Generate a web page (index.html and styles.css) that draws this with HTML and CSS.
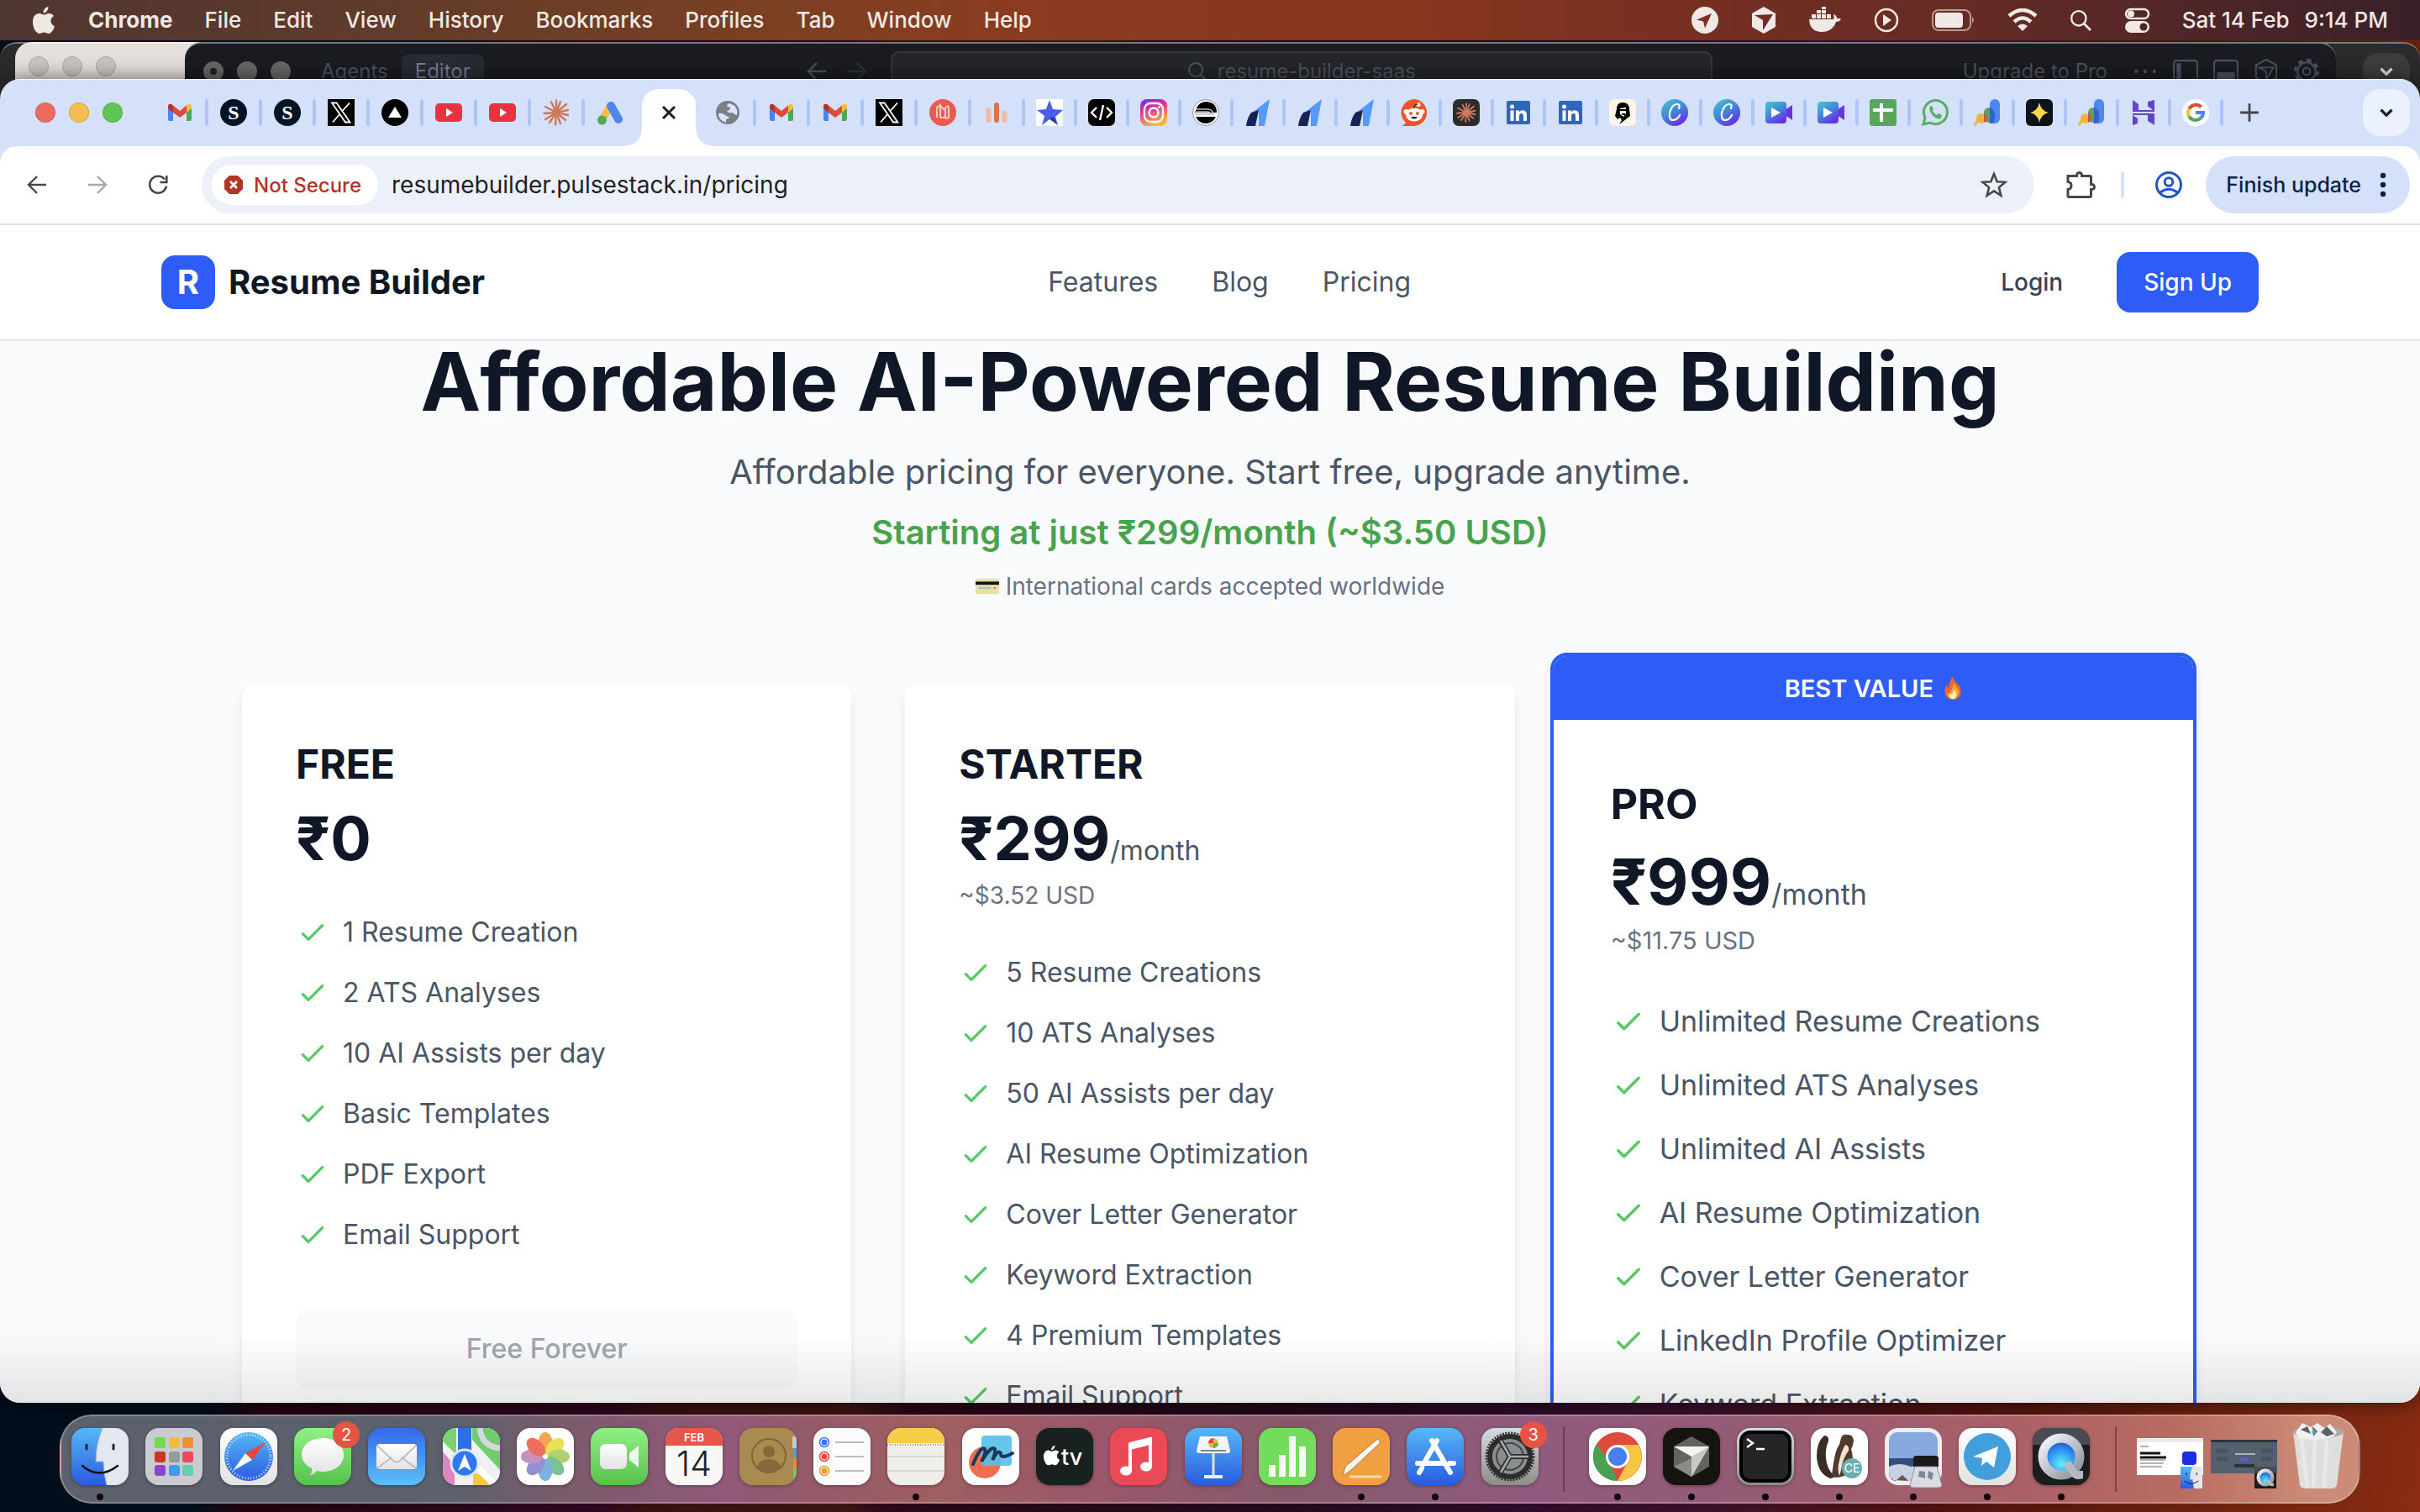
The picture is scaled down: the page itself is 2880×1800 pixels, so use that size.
FILE: index.html
```html
<!DOCTYPE html>
<html lang="en">
<head>
    <meta charset="UTF-8">
    <meta name="viewport" content="width=device-width, initial-scale=1.0">
    <title>Pricing - Resume Builder</title>
    <link rel="stylesheet" href="styles.css">
</head>
<body>
    <!-- shared icons -->
    <svg class="sprite" aria-hidden="true">
        <defs>
            <linearGradient id="gInsta" x1="0" y1="0" x2="0.4" y2="1"><stop offset="0" stop-color="#6a2cf5"/><stop offset=".45" stop-color="#e62e9a"/><stop offset="1" stop-color="#fdb53a"/></linearGradient>
            <linearGradient id="gCanva" x1="0" y1="0" x2="0.6" y2="1"><stop offset="0" stop-color="#4fc4cc"/><stop offset=".5" stop-color="#3f8fd8"/><stop offset="1" stop-color="#6a2ee8"/></linearGradient>
            <linearGradient id="gBlueUp" x1="0" y1="0" x2="0" y2="1"><stop offset="0" stop-color="#3468e8"/><stop offset="1" stop-color="#5cc0f8"/></linearGradient>
            <linearGradient id="gBlueDown" x1="0" y1="0" x2="0" y2="1"><stop offset="0" stop-color="#55b8f5"/><stop offset="1" stop-color="#2a5be0"/></linearGradient>
            <linearGradient id="gGreen" x1="0" y1="0" x2="0" y2="1"><stop offset="0" stop-color="#90f086"/><stop offset="1" stop-color="#56c24a"/></linearGradient>
            <linearGradient id="gWhite" x1="0" y1="0" x2="0" y2="1"><stop offset="0" stop-color="#fff"/><stop offset="1" stop-color="#e2e2e2"/></linearGradient>
            <linearGradient id="gSteel" x1="0" y1="0" x2="1" y2="1"><stop offset="0" stop-color="#f5f8fc"/><stop offset="1" stop-color="#8b9099"/></linearGradient>
            <linearGradient id="gGray" x1="0" y1="0" x2="0" y2="1"><stop offset="0" stop-color="#d5dde2"/><stop offset="1" stop-color="#8d8d89"/></linearGradient>
            <radialGradient id="gQt" cx=".5" cy=".7" r=".7"><stop offset="0" stop-color="#5ff0ff"/><stop offset=".6" stop-color="#2a86f0"/><stop offset="1" stop-color="#1a3fb8"/></radialGradient>
        </defs>

        <symbol id="i-gmail" viewBox="0 0 32 32"><path d="M2 9v15q0 2 2 2h4V14z" fill="#4a84f0"/><path d="M30 9v15q0 2-2 2h-4V14z" fill="#4fa559"/><path d="M24 7.500l2-1.500q4-1 4 3v2l-6 5z" fill="#f3c042"/><path d="M8 16V7.500L16 14l8-6.500V16l-8 6z" fill="#dc4b3c"/><path d="M2 9q0-4 4-3l2 1.500V16l-6-5z" fill="#b5352a"/></symbol>
        <symbol id="i-x" viewBox="0 0 32 32"><path d="M0 0h32v32H0z" fill="#000"/><path d="M5 4.500h5.500l16 23H21zM26 4.500L17.500 14M13.800 18.500L6 27.500" fill="none" stroke="#fff" stroke-width="1.800"/></symbol>
        <symbol id="i-triangle" viewBox="0 0 32 32"><circle cx="16" cy="16" r="16" fill="#000"/><path d="M16 9l8 13H8z" fill="#fff"/></symbol>
        <symbol id="i-youtube" viewBox="0 0 32 32"><rect y="5" width="32" height="22" rx="5" fill="#eb323f"/><path d="M13 11v10l8-5z" fill="#fff"/></symbol>
        <symbol id="i-burst" viewBox="0 0 32 32"><path d="M16 16L16 1.500M16 16l5-13M16 16L28 6M16 16l14-3M16 16l14 3M16 16l11 9M16 16l5 13M16 16l-1 14.500M16 16L8 28M16 16L3 24M16 16L1.500 17M16 16L3 9M16 16L10 3.500" stroke="#d0795a" stroke-width="2.400" stroke-linecap="round"/></symbol>
        <symbol id="i-ads" viewBox="0 0 32 32"><path d="M16.500 8L6 25" stroke="#f3c042" stroke-width="9" stroke-linecap="round"/><path d="M17 8l9 16" stroke="#5085ec" stroke-width="10" stroke-linecap="round"/><circle cx="6.500" cy="25" r="5.500" fill="#55a65b"/></symbol>
        <symbol id="i-globe" viewBox="0 0 32 32"><circle cx="16" cy="16" r="14" fill="#7c7f84"/><path d="M5 17q5-1 8 2 2 2 5 2-1 3-4 3v4Q5 25 5 17zM18 5q-3 1-3 4 4 0 4 2t-4 3q2 3 5 2 3 0 4 2l3 1q2-11-9-14z" fill="#d7e2fb"/></symbol>
        <symbol id="i-zag" viewBox="0 0 32 32"><circle cx="16" cy="16" r="16" fill="#ea5a4f"/><path d="M9 22V10l4-3v15M13 8l4 4 5-4M22 8l1 2v12l-4 1M13 22h6V11" fill="none" stroke="#f8cdc6" stroke-width="2"/></symbol>
        <symbol id="i-bars" viewBox="0 0 32 32"><rect x="3.500" y="10" width="6" height="18" rx="3" fill="#efb9a9"/><rect x="13" y="4" width="6" height="24" rx="3" fill="#dc7350"/><rect x="22.500" y="14" width="6" height="14" rx="3" fill="#efb9a9"/></symbol>
        <symbol id="i-star" viewBox="0 0 32 32"><path d="M0 0h32v32H0z" fill="#fff"/><path d="M16 1l4 11 12 1-9 8 3 10-10-7-9 7 3-11-9-7 11-1z" fill="#4a5ee8"/><path d="M16 23l5-2 4 9z" fill="#2336a5"/></symbol>
        <symbol id="i-code" viewBox="0 0 32 32"><rect width="32" height="32" rx="7" fill="#000"/><path d="M10 10l-6 6 6 6M22 10l6 6-6 6M18 7l-4 18" fill="none" stroke="#fff" stroke-width="2.400"/></symbol>
        <symbol id="i-insta" viewBox="0 0 32 32"><rect width="32" height="32" rx="8" fill="url(#gInsta)"/><rect x="5" y="5" width="22" height="22" rx="7" fill="none" stroke="#fff" stroke-width="2.400"/><circle cx="16" cy="16" r="5.500" fill="none" stroke="#fff" stroke-width="2.400"/><circle cx="22.500" cy="9.500" r="1.500" fill="#fff"/></symbol>
        <symbol id="i-train" viewBox="0 0 32 32"><circle cx="16" cy="16" r="15.500" fill="#fff" stroke="#555" stroke-width=".6"/><path d="M5 11Q8 3 17 3q12 1 12 13H3zM4 21h24q-4 8-12 8T4 21z" fill="#000"/><path d="M4 12h14q6 0 7 6H3M4 15h14q3 0 4 3" fill="none" stroke="#bbb" stroke-width="1.500"/></symbol>
        <symbol id="i-sail" viewBox="0 0 32 32"><path d="M30 0L8 17l9-4v19h7z" fill="#559af8"/><path d="M8 16l9-3-4 19H2q1-9 6-16z" fill="#16245a"/></symbol>
        <symbol id="i-reddit" viewBox="0 0 32 32"><path d="M16 0a16 16 0 1 1-2 32H2l4-4A16 16 0 0 1 16 0z" fill="#ee5426"/><ellipse cx="16" cy="18.500" rx="10" ry="8" fill="#fff"/><circle cx="6.500" cy="15" r="3" fill="#fff"/><circle cx="25.500" cy="15" r="3" fill="#fff"/><circle cx="21" cy="6.500" r="2.500" fill="#fff"/><path d="M16 11q0-5 4-5" fill="none" stroke="#333" stroke-width="1.500"/><circle cx="12" cy="17" r="2" fill="#ee5426"/><circle cx="20" cy="17" r="2" fill="#ee5426"/><path d="M12 21h8q-4 5-8 0z"/></symbol>
        <symbol id="i-linkedin" viewBox="0 0 32 32"><rect x="2" y="2" width="28" height="28" rx="2" fill="#2d67bc"/><circle cx="8.500" cy="9" r="2.500" fill="#fff"/><path d="M6.500 13.500h4V26h-4zM13 13.500h4v2q1.500-2.300 4-2.300 5 0 5 6V26h-4v-6q0-3-2.500-3T17 20v6h-4z" fill="#fff"/></symbol>
        <symbol id="i-face" viewBox="0 0 32 32"><rect width="32" height="32" rx="6" fill="#fdf5e8"/><path d="M16 4q-7 0-7 8l-2 8 3 4 3-2 2 3-3 5 8-6 5-4-1-8q0-8-8-8z" fill="#000"/><path d="M13 11l7-1v7l-3 4-4-3z" fill="#fdf5e8"/><path d="M12 13h8M15 18h4" stroke="#000" stroke-width="2"/></symbol>
        <symbol id="i-canva" viewBox="0 0 32 32"><circle cx="16" cy="16" r="16" fill="url(#gCanva)"/><path d="M21 11q2-5-2-5-6 0-9 10-1 9 4 9t8-6" fill="none" stroke="#fff" stroke-width="2.200" stroke-linecap="round"/></symbol>
        <symbol id="i-video" viewBox="0 0 32 32"><path d="M23 13l9-6v18l-9-6z" fill="#6a35d8"/><rect y="3" width="25" height="26" rx="4" fill="url(#gCanva)"/><path d="M7 10v12l11-6z" fill="#fff"/></symbol>
        <symbol id="i-sheets" viewBox="0 0 32 32"><rect width="32" height="32" rx="3" fill="#58a65a"/><path d="M14 5v22M4 13h24" stroke="#fff" stroke-width="4"/></symbol>
        <symbol id="i-whatsapp" viewBox="0 0 32 32"><path d="M2 30l2-8a14 14 0 1 1 6 6z" fill="none" stroke="#57ae68" stroke-width="3"/><path d="M11 8q-4 3 1 10t11 5l1-4-4-2-2 2q-4-2-5-5l1-2-2-4z" fill="#57ae68"/></symbol>
        <symbol id="i-chart" viewBox="0 0 32 32"><path d="M1 31l7-12" stroke="#edb543" stroke-width="3"/><circle cx="9" cy="23" r="6" fill="#edb543"/><rect x="12" y="10" width="13" height="18" rx="6" fill="#55a65b"/><path d="M12 17q4 2 4 8l-4 3z" fill="#dc4b3c"/><path d="M19 6a6 6 0 0 1 12 0v17a6 6 0 0 1-6 6h-6z" fill="#4f86ee"/><path d="M19 10q6 2 6 10t-3 9h-3z" fill="#3263c8"/></symbol>
        <symbol id="i-spark" viewBox="0 0 32 32"><rect width="32" height="32" rx="6" fill="#0c1419"/><path d="M16 4q2 10 11 12-9 2-11 12-2-10-11-12 9-2 11-12z" fill="#f8d74a"/></symbol>
        <symbol id="i-h" viewBox="0 0 32 32"><path d="M3 1l7 5v7h17l-5-4h-1V3l8-2v14H3zM29 31l-8-5v-7H3l6 4v6l-6 2V17h26z" fill="#6444c6"/></symbol>
        <symbol id="i-google" viewBox="0 0 32 32"><circle cx="16" cy="16" r="16" fill="#fff"/><g fill="none" stroke-width="4"><path d="M22.500 9.500A9 9 0 0 0 8.200 11.500" stroke="#dc4b3c"/><path d="M8.200 11.500a9 9 0 0 0 0 9" stroke="#f3c042"/><path d="M8.200 20.500a9 9 0 0 0 14 2" stroke="#55a65b"/><path d="M22.200 22.500A9 9 0 0 0 25 16h-9" stroke="#4a84f0"/></g></symbol>
        <symbol id="i-check" viewBox="0 0 24 24"><path d="M5 13l4 4L19 7" fill="none" stroke="#56c864" stroke-width="2" stroke-linecap="round" stroke-linejoin="round"/></symbol>
        <symbol id="i-chevron" viewBox="0 0 24 24"><path d="M6 9l6 6 6-6" fill="none" stroke="currentColor" stroke-width="3"/></symbol>
        <symbol id="i-arrow" viewBox="0 0 24 24"><path d="M23 12H2M12 2L2 12l10 10" fill="none" stroke="currentColor" stroke-width="2.400"/></symbol>
        <symbol id="i-search" viewBox="0 0 24 24"><circle cx="10" cy="10" r="8" fill="none" stroke="currentColor" stroke-width="2.200"/><path d="M16 16l7 7" stroke="currentColor" stroke-width="2.600"/></symbol>
        <symbol id="i-cube" viewBox="0 0 32 32"><path d="M16 1l13 7v16l-13 7-13-7V8z" fill="none" stroke="currentColor" stroke-width="2.200"/><path d="M7 11h18L16 27V16z" fill="none" stroke="currentColor" stroke-width="2"/></symbol>
        <symbol id="i-apple" viewBox="0 0 28 34"><path d="M19.500 1q0 4-3 6.500-1.500 1.200-3 1Q13.200 5.500 15.500 3q1.600-1.600 4-2zM26 12q-3.500 2.200-3.500 6t4.500 6.500q-1 3.500-3.500 6.500-1.500 2-3.500 2-1.500 0-2.800-.7t-2.700-.7-2.700.7T8.500 33q-2 0-4-2.800Q1 25.500 1 19.500q0-6 3-8.700Q6 9 8.500 9q1.700 0 3.200.8t2.600.8 2.700-.9Q19 9 20.500 9q3.500 0 5.500 3z" fill="currentColor"/></symbol>
        <symbol id="i-finder" viewBox="0 0 68 68"><path d="M0 0h68v68H0z" fill="url(#gBlueDown)"/><path d="M37 0Q29 19 29 40h9q0 14 4 28h26V0z" fill="#e3e7ef"/><path d="M37 0Q29 19 29 40h9q0 14 4 28" fill="none" stroke="#9fb4d8" stroke-width="1"/><path d="M18 20v5M50 20v5" stroke="#1c2a44" stroke-width="3" stroke-linecap="round"/><path d="M13 45q20 17 42 0" fill="none" stroke="#111" stroke-width="2.500" stroke-linecap="round"/></symbol>
        <symbol id="i-quicktime" viewBox="0 0 68 68"><path d="M0 0h68v68H0z" fill="#1d1d20"/><path d="M0 0h68v20H0z" fill="#4a4b50"/><circle cx="34" cy="34" r="22" fill="url(#gQt)" stroke="url(#gSteel)" stroke-width="11"/><path d="M36 43l9-4 8 12h7v9q-9 3-14-3z" fill="#b4b9c3"/></symbol>
    </svg>

    <header class="menubar">
        <nav class="menu">
            <button type="button" class="menu-apple" aria-label="Apple menu"><svg viewBox="0 0 28 34"><use href="#i-apple"/></svg></button>
            <button type="button" class="menu-app">Chrome</button>
            <button type="button">File</button>
            <button type="button">Edit</button>
            <button type="button">View</button>
            <button type="button">History</button>
            <button type="button">Bookmarks</button>
            <button type="button">Profiles</button>
            <button type="button">Tab</button>
            <button type="button">Window</button>
            <button type="button">Help</button>
        </nav>
        <div class="status">
            <svg viewBox="0 0 32 32"><circle cx="16" cy="16" r="16" fill="currentColor"/><path d="M24 8L6 15.500l8 2 2 8z" fill="#7b3023"/></svg>
            <svg viewBox="0 0 32 32"><path d="M16 0l14 8v16l-14 8L2 24V8z" fill="currentColor"/><path d="M5 10l22-1-12 19V16z" fill="#702c23"/></svg>
            <svg class="status-docker" viewBox="0 0 38 32"><path d="M0 15h29q1-4 0-6 4 1 4 5 3-1 5 1-2 3-6 3-4 12-17 12Q1 30 0 15z" fill="currentColor"/><path d="M3 9h5v5H3zM9 9h5v5H9zM15 9h5v5h-5zM21 9h5v5h-5zM9 4h5v4H9zM15 4h5v4h-5zM15-1h5v4h-5z" fill="currentColor"/></svg>
            <svg viewBox="0 0 32 32"><circle cx="16" cy="16" r="13" fill="none" stroke="currentColor" stroke-width="2.500"/><path d="M12 9v14l10-7z" fill="currentColor"/></svg>
            <svg class="status-battery" viewBox="0 0 52 26"><rect x="1" y="1" width="45" height="24" rx="7" fill="none" stroke="#b99a92" stroke-width="2"/><rect x="4" y="4" width="33" height="18" rx="4" fill="currentColor"/><path d="M48 9q4 4 0 8z" fill="#b99a92"/></svg>
            <svg class="status-wifi" viewBox="0 0 36 28"><path d="M2 9q16-14 32 0M8 16q10-9 20 0" fill="none" stroke="currentColor" stroke-width="4.500"/><path d="M18 27l-6-6q6-5 12 0z" fill="currentColor"/></svg>
            <svg class="status-search" viewBox="0 0 24 24"><use href="#i-search"/></svg>
            <svg viewBox="0 0 32 32"><rect x="3" y="3" width="27" height="11" rx="5.500" fill="none" stroke="currentColor" stroke-width="2.500"/><circle cx="9" cy="8.500" r="4" fill="currentColor"/><rect x="2" y="17" width="29" height="14" rx="7" fill="currentColor"/><circle cx="24" cy="24" r="4.500" fill="#4a2428"/></svg>
            <time class="clock"><span>Sat 14 Feb</span> <span>9:14 PM</span></time>
        </div>
    </header>

    <!-- windows behind the browser -->
    <div class="back-window back-right"><button type="button" aria-label="Search tabs"><svg viewBox="0 0 24 24"><use href="#i-chevron"/></svg></button></div>
    <div class="back-window back-light"><i></i><i></i><i></i></div>
    <div class="back-window back-editor">
        <div class="editor-left">
            <div class="editor-dots"><i class="edited"></i><i></i><i></i></div>
            <span class="editor-tab">Agents</span>
            <span class="editor-tab selected">Editor</span>
        </div>
        <div class="editor-arrows">
            <svg viewBox="0 0 24 24"><use href="#i-arrow"/></svg>
            <svg class="forward" viewBox="0 0 24 24"><use href="#i-arrow"/></svg>
        </div>
        <div class="editor-search"><svg viewBox="0 0 24 24"><use href="#i-search"/></svg>resume-builder-saas</div>
        <div class="editor-right">
            <span>Upgrade to Pro</span>
            <svg viewBox="0 0 28 28"><circle cx="4" cy="14" r="2" fill="currentColor"/><circle cx="14" cy="14" r="2" fill="currentColor"/><circle cx="24" cy="14" r="2" fill="currentColor"/></svg>
            <svg viewBox="0 0 28 28"><rect x="1" y="2" width="26" height="24" rx="3" fill="none" stroke="currentColor" stroke-width="2"/><path d="M4 5h5v18H4z" fill="currentColor"/></svg>
            <svg viewBox="0 0 28 28"><rect x="1" y="2" width="26" height="24" rx="3" fill="none" stroke="currentColor" stroke-width="2"/><path d="M4 15h20v8H4z" fill="currentColor"/></svg>
            <svg viewBox="0 0 32 32"><use href="#i-cube"/></svg>
            <svg viewBox="0 0 28 28"><circle cx="14" cy="14" r="10" fill="none" stroke="currentColor" stroke-width="2"/><circle cx="14" cy="14" r="12.500" fill="none" stroke="currentColor" stroke-width="3" stroke-dasharray="5 4.800"/><circle cx="14" cy="14" r="4" fill="none" stroke="currentColor" stroke-width="2"/></svg>
        </div>
    </div>

    <div class="browser">
        <div class="tabstrip">
            <div class="traffic"><i class="close"></i><i class="minimise"></i><i class="zoom"></i></div>
            <div class="tabs">
                <button type="button" class="tab" aria-label="Gmail"><svg><use href="#i-gmail"/></svg></button>
                <button type="button" class="tab"><span class="letter-icon">S</span></button>
                <button type="button" class="tab"><span class="letter-icon">S</span></button>
                <button type="button" class="tab" aria-label="X"><svg><use href="#i-x"/></svg></button>
                <button type="button" class="tab" aria-label="Vercel"><svg><use href="#i-triangle"/></svg></button>
                <button type="button" class="tab" aria-label="YouTube"><svg><use href="#i-youtube"/></svg></button>
                <button type="button" class="tab" aria-label="YouTube"><svg><use href="#i-youtube"/></svg></button>
                <button type="button" class="tab" aria-label="Claude"><svg><use href="#i-burst"/></svg></button>
                <button type="button" class="tab last" aria-label="Google Ads"><svg><use href="#i-ads"/></svg></button>
                <button type="button" class="tab active" aria-label="Close tab"><svg viewBox="0 0 24 24"><path d="M5 5l14 14M19 5L5 19" stroke="#1f1f1f" stroke-width="3"/></svg></button>
                <button type="button" class="tab" aria-label="Website"><svg><use href="#i-globe"/></svg></button>
                <button type="button" class="tab" aria-label="Gmail"><svg><use href="#i-gmail"/></svg></button>
                <button type="button" class="tab" aria-label="Gmail"><svg><use href="#i-gmail"/></svg></button>
                <button type="button" class="tab" aria-label="X"><svg><use href="#i-x"/></svg></button>
                <button type="button" class="tab" aria-label="Listing"><svg><use href="#i-zag"/></svg></button>
                <button type="button" class="tab" aria-label="Dashboard"><svg><use href="#i-bars"/></svg></button>
                <button type="button" class="tab narrow" aria-label="Star"><svg><use href="#i-star"/></svg></button>
                <button type="button" class="tab narrow" aria-label="Code"><svg><use href="#i-code"/></svg></button>
                <button type="button" class="tab narrow" aria-label="Instagram"><svg><use href="#i-insta"/></svg></button>
                <button type="button" class="tab narrow" aria-label="Railway"><svg><use href="#i-train"/></svg></button>
                <button type="button" class="tab narrow" aria-label="Payments"><svg><use href="#i-sail"/></svg></button>
                <button type="button" class="tab narrow" aria-label="Payments"><svg><use href="#i-sail"/></svg></button>
                <button type="button" class="tab narrow" aria-label="Payments"><svg><use href="#i-sail"/></svg></button>
                <button type="button" class="tab narrow" aria-label="Reddit"><svg><use href="#i-reddit"/></svg></button>
                <button type="button" class="tab narrow" aria-label="Claude Code"><svg class="dark"><use href="#i-burst"/></svg></button>
                <button type="button" class="tab narrow" aria-label="LinkedIn"><svg><use href="#i-linkedin"/></svg></button>
                <button type="button" class="tab narrow" aria-label="LinkedIn"><svg><use href="#i-linkedin"/></svg></button>
                <button type="button" class="tab narrow" aria-label="Portrait"><svg><use href="#i-face"/></svg></button>
                <button type="button" class="tab narrow" aria-label="Canva"><svg><use href="#i-canva"/></svg></button>
                <button type="button" class="tab narrow" aria-label="Canva"><svg><use href="#i-canva"/></svg></button>
                <button type="button" class="tab narrow" aria-label="Video"><svg><use href="#i-video"/></svg></button>
                <button type="button" class="tab narrow" aria-label="Video"><svg><use href="#i-video"/></svg></button>
                <button type="button" class="tab narrow" aria-label="Sheets"><svg><use href="#i-sheets"/></svg></button>
                <button type="button" class="tab narrow" aria-label="WhatsApp"><svg><use href="#i-whatsapp"/></svg></button>
                <button type="button" class="tab narrow" aria-label="Search Console"><svg><use href="#i-chart"/></svg></button>
                <button type="button" class="tab narrow" aria-label="Spark"><svg><use href="#i-spark"/></svg></button>
                <button type="button" class="tab narrow" aria-label="Search Console"><svg><use href="#i-chart"/></svg></button>
                <button type="button" class="tab narrow" aria-label="Hostinger"><svg><use href="#i-h"/></svg></button>
                <button type="button" class="tab narrow" aria-label="Google"><svg><use href="#i-google"/></svg></button>
                <button type="button" class="new-tab" aria-label="New tab"><svg viewBox="0 0 24 24"><path d="M12 2v20M2 12h20" stroke="#474747" stroke-width="2.600"/></svg></button>
            </div>
            <button type="button" class="tab-search" aria-label="Search tabs"><svg viewBox="0 0 24 24"><use href="#i-chevron"/></svg></button>
        </div>

        <div class="toolbar">
            <div class="nav-buttons">
                <button type="button" aria-label="Back"><svg viewBox="0 0 24 24"><use href="#i-arrow"/></svg></button>
                <button type="button" class="forward" aria-label="Forward" disabled><svg viewBox="0 0 24 24"><use href="#i-arrow"/></svg></button>
                <button type="button" aria-label="Reload"><svg viewBox="0 0 24 24"><path d="M20 5.500A10 10 0 1 0 22 13.500M22.300 1v8H14.500" fill="none" stroke="currentColor" stroke-width="2.600"/></svg></button>
            </div>
            <div class="omnibox">
                <button type="button" class="not-secure"><svg viewBox="0 0 24 24"><path d="M7 1h10l6 6v10l-6 6H7l-6-6V7z" fill="#b3352a"/><path d="M8 8l8 8M16 8l-8 8" stroke="#fff" stroke-width="2.600"/></svg>Not Secure</button>
                <input type="text" class="address" aria-label="Address" value="resumebuilder.pulsestack.in/pricing">
                <button type="button" class="bookmark" aria-label="Bookmark"><svg viewBox="0 0 32 32"><path d="M16 3l3.700 9.200 9.800.6-7.600 6.300 2.500 9.700L16 23.400l-8.400 5.400 2.500-9.700-7.600-6.300 9.800-.6z" fill="none" stroke="#474747" stroke-width="2.600"/></svg></button>
            </div>
            <button type="button" class="tool" aria-label="Extensions"><svg viewBox="0 0 36 36"><path d="M3 7.500h10.500v-1a3 3 0 0 1 6 0v1H29a1.500 1.500 0 0 1 1.500 1.500v8.500h1a3 3 0 0 1 0 6h-1V31a1.500 1.500 0 0 1-1.500 1.500H4.500A1.500 1.500 0 0 1 3 31v-7.500q4-.5 4-4.500t-4-4.500z" fill="none" stroke="#474747" stroke-width="3"/></svg></button>
            <span class="tool-divider"></span>
            <button type="button" class="tool profile" aria-label="Profile"><svg viewBox="0 0 32 32"><circle cx="16" cy="16" r="14.500" fill="none" stroke="#1f56c4" stroke-width="3"/><circle cx="16" cy="12.500" r="4.800" fill="none" stroke="#1f56c4" stroke-width="3"/><path d="M6 25q10-7.500 20 0" fill="none" stroke="#1f56c4" stroke-width="3"/></svg></button>
            <button type="button" class="update">Finish update<svg viewBox="0 0 8 32"><circle cx="4" cy="5" r="3.200"/><circle cx="4" cy="16" r="3.200"/><circle cx="4" cy="27" r="3.200"/></svg></button>
        </div>

        <div class="page">
            <header class="site-header">
                <div class="site-nav">
                    <a href="#" class="brand"><span class="brand-mark">R</span>Resume Builder</a>
                    <nav class="links">
                        <a href="#">Features</a>
                        <a href="#">Blog</a>
                        <a href="#">Pricing</a>
                    </nav>
                    <div class="account">
                        <a href="#" class="login">Login</a>
                        <a href="#" class="signup">Sign Up</a>
                    </div>
                </div>
            </header>

            <main>
                <section class="hero">
                    <h1>Affordable AI-Powered Resume Building</h1>
                    <p class="lead">Affordable pricing for everyone. Start free, upgrade anytime.</p>
                    <p class="starting">Starting at just ₹299/month (~$3.50 USD)</p>
                    <p class="cards-note"><svg viewBox="0 0 30 20"><rect width="30" height="20" rx="2" fill="#e6dfae"/><path d="M0 4h30v4H0z" fill="#111"/><path d="M4 12h16" stroke="#a9b3c8" stroke-width="2.500" stroke-dasharray="4 1"/><path d="M23 12h3" stroke="#c08a4a" stroke-width="2"/></svg>International cards accepted worldwide</p>
                </section>

                <section class="plans">
                    <article class="plan">
                        <h2>FREE</h2>
                        <p class="price">₹0</p>
                        <ul>
                            <li><svg><use href="#i-check"/></svg>1 Resume Creation</li>
                            <li><svg><use href="#i-check"/></svg>2 ATS Analyses</li>
                            <li><svg><use href="#i-check"/></svg>10 AI Assists per day</li>
                            <li><svg><use href="#i-check"/></svg>Basic Templates</li>
                            <li><svg><use href="#i-check"/></svg>PDF Export</li>
                            <li><svg><use href="#i-check"/></svg>Email Support</li>
                        </ul>
                        <button type="button" class="plan-button" disabled>Free Forever</button>
                    </article>
                    <article class="plan">
                        <h2>STARTER</h2>
                        <p class="price">₹299<span>/month</span></p>
                        <p class="usd">~$3.52 USD</p>
                        <ul>
                            <li><svg><use href="#i-check"/></svg>5 Resume Creations</li>
                            <li><svg><use href="#i-check"/></svg>10 ATS Analyses</li>
                            <li><svg><use href="#i-check"/></svg>50 AI Assists per day</li>
                            <li><svg><use href="#i-check"/></svg>AI Resume Optimization</li>
                            <li><svg><use href="#i-check"/></svg>Cover Letter Generator</li>
                            <li><svg><use href="#i-check"/></svg>Keyword Extraction</li>
                            <li><svg><use href="#i-check"/></svg>4 Premium Templates</li>
                            <li><svg><use href="#i-check"/></svg>Email Support</li>
                        </ul>
                    </article>
                    <article class="plan pro">
                        <p class="best">BEST VALUE<svg viewBox="0 0 24 32"><path d="M12 0q1 6 6 10t5 11q0 10-11 11Q1 31 1 20q0-5 3-9 0 4 2 5 1-9 6-16z" fill="#f0642c"/><path d="M13 9q5 6 7 11 0 10-8 11-8-1-8-9 2 2 4 1 4-5 5-14z" fill="#fba62f"/><path d="M13 18q5 5 4 9-2 4-5 4t-5-4q0-3 2-4l1 2q3-2 3-7z" fill="#fff3b0"/></svg></p>
                        <div class="pro-body">
                            <h2>PRO</h2>
                            <p class="price">₹999<span>/month</span></p>
                            <p class="usd">~$11.75 USD</p>
                            <ul>
                                <li><svg><use href="#i-check"/></svg>Unlimited Resume Creations</li>
                                <li><svg><use href="#i-check"/></svg>Unlimited ATS Analyses</li>
                                <li><svg><use href="#i-check"/></svg>Unlimited AI Assists</li>
                                <li><svg><use href="#i-check"/></svg>AI Resume Optimization</li>
                                <li><svg><use href="#i-check"/></svg>Cover Letter Generator</li>
                                <li><svg><use href="#i-check"/></svg>LinkedIn Profile Optimizer</li>
                                <li><svg><use href="#i-check"/></svg>Keyword Extraction</li>
                            </ul>
                        </div>
                    </article>
                </section>
            </main>
        </div>
    </div>

    <footer class="dock">
        <div class="dock-apps">
            <div class="app running"><svg viewBox="0 0 68 68"><use href="#i-finder"/></svg></div>
            <div class="app"><svg viewBox="0 0 68 68"><path d="M0 0h68v68H0z" fill="#c9cbd0"/><rect x="11" y="11" width="13" height="13" rx="3" fill="#6fdc50"/><rect x="28" y="11" width="13" height="13" rx="3" fill="#f3bc3c"/><rect x="44" y="11" width="13" height="13" rx="3" fill="#ee8f35"/><rect x="11" y="28" width="13" height="13" rx="3" fill="#cc3428"/><rect x="28" y="28" width="13" height="13" rx="3" fill="#94999c"/><rect x="44" y="28" width="13" height="13" rx="3" fill="#ea4a60"/><rect x="11" y="44" width="13" height="13" rx="3" fill="#8c45d0"/><rect x="28" y="44" width="13" height="13" rx="3" fill="#3c9cf5"/><rect x="44" y="44" width="13" height="13" rx="3" fill="#67cfae"/></svg></div>
            <div class="app"><svg viewBox="0 0 68 68"><path d="M0 0h68v68H0z" fill="url(#gWhite)"/><circle cx="34" cy="34" r="29" fill="url(#gBlueDown)"/><circle cx="34" cy="34" r="26" fill="none" stroke="#d6ebfb" stroke-width="3" stroke-dasharray="1 2.400"/><path d="M54 17L30 30l8 8z" fill="#e8483c"/><path d="M15 51l15-21 8 8z" fill="#f5f5f5"/></svg></div>
            <div class="app"><svg viewBox="0 0 68 68"><path d="M0 0h68v68H0z" fill="url(#gGreen)"/><path d="M34 12c15 0 25 9 25 20S49 52 34 52q-4 0-7-1-3 4-8 5 3-4 2-8Q9 42 9 32c0-11 10-20 25-20z" fill="url(#gWhite)"/></svg><span class="badge">2</span></div>
            <div class="app"><svg viewBox="0 0 68 68"><path d="M0 0h68v68H0z" fill="url(#gBlueUp)"/><rect x="10" y="19" width="48" height="30" rx="4" fill="url(#gWhite)"/><path d="M11 21l19 18q4 3 8 0l19-18M11 48l17-13M57 48L40 35" fill="none" stroke="#aab0b8" stroke-width="1.500"/></svg></div>
            <div class="app"><svg viewBox="0 0 68 68"><path d="M0 0h68v68H0z" fill="#f1f1f3"/><path d="M0 0h16v32L0 16z" fill="#7ad273"/><path d="M35 14l33 36V0H35z" fill="#6fce6b"/><path d="M0 28l14 17v23H0z" fill="#e084c4"/><path d="M36 68V52l32 16z" fill="#f3c93f"/><path d="M18 0h16v40H18z" fill="#2f6fe6"/><path d="M44 0q2 22 24 24" fill="none" stroke="#d6d7db" stroke-width="7"/><path d="M34 40l34 34" stroke="#fff" stroke-width="8"/><circle cx="26" cy="42" r="16" fill="#2e78f0" stroke="#dfe8f7" stroke-width="3"/><path d="M26 31l8 20-8-5-8 5z" fill="#fff"/></svg></div>
            <div class="app"><svg viewBox="0 0 68 68"><path d="M0 0h68v68H0z" fill="#fff"/><g opacity=".88"><ellipse cx="34" cy="18" rx="8.500" ry="13" fill="#f29b38"/><ellipse cx="34" cy="18" rx="8.500" ry="13" fill="#e6dc45" transform="rotate(45 34 34)"/><ellipse cx="34" cy="18" rx="8.500" ry="13" fill="#a6cd5a" transform="rotate(90 34 34)"/><ellipse cx="34" cy="18" rx="8.500" ry="13" fill="#68b985" transform="rotate(135 34 34)"/><ellipse cx="34" cy="18" rx="8.500" ry="13" fill="#6da6dc" transform="rotate(180 34 34)"/><ellipse cx="34" cy="18" rx="8.500" ry="13" fill="#8480cc" transform="rotate(225 34 34)"/><ellipse cx="34" cy="18" rx="8.500" ry="13" fill="#bd83b5" transform="rotate(270 34 34)"/><ellipse cx="34" cy="18" rx="8.500" ry="13" fill="#ea5b4b" transform="rotate(315 34 34)"/></g></svg></div>
            <div class="app"><svg viewBox="0 0 68 68"><path d="M0 0h68v68H0z" fill="url(#gGreen)"/><rect x="11" y="19" width="32" height="30" rx="7" fill="url(#gWhite)"/><path d="M46 30l11-9v26l-11-9z" fill="#eef7ec"/></svg></div>
            <div class="app"><svg viewBox="0 0 68 68"><path d="M0 0h68v68H0z" fill="#f8f8f6"/><path d="M0 0h68v21H0z" fill="#e5574a"/><text x="34" y="16" text-anchor="middle" font-family="Inter, sans-serif" font-size="13" font-weight="600" fill="#fff">FEB</text><text x="34" y="57" text-anchor="middle" font-family="Inter, sans-serif" font-size="41" font-weight="300" fill="#222">14</text></svg></div>
            <div class="app"><svg viewBox="0 0 68 68"><path d="M0 0h68v68H0z" fill="#a98a50"/><path d="M63 10h5v14h-5z" fill="#c9c9c9"/><path d="M64 24h4v12h-4z" fill="#4c9ed8"/><path d="M64 36h4v12h-4z" fill="#e58a35"/><path d="M64 48h4v12h-4z" fill="#7ac654"/><circle cx="35" cy="33" r="20" fill="none" stroke="#7e6534" stroke-width="2"/><circle cx="35" cy="28" r="7" fill="#86693a"/><path d="M20 47q4-10 15-10t15 10q-13 12-30 0z" fill="#86693a"/></svg></div>
            <div class="app"><svg viewBox="0 0 68 68"><path d="M0 0h68v68H0z" fill="#fcfcfc"/><path d="M26 17h34M26 34h34M26 51h34" stroke="#bcbcbc" stroke-width="2"/><g stroke-width="1.500"><circle cx="13" cy="17" r="5.500" fill="none" stroke="#3478f0"/><circle cx="13" cy="17" r="3.500" fill="#3478f0"/><circle cx="13" cy="34" r="5.500" fill="none" stroke="#e5483d"/><circle cx="13" cy="34" r="3.500" fill="#e5483d"/><circle cx="13" cy="51" r="5.500" fill="none" stroke="#ea9a35"/><circle cx="13" cy="51" r="3.500" fill="#ea9a35"/></g></svg></div>
            <div class="app running"><svg viewBox="0 0 68 68"><path d="M0 0h68v68H0z" fill="#efeeea"/><path d="M0 0h68v18H0z" fill="#f7ce46"/><path d="M0 20h68" stroke="#9c9c98" stroke-width="2" stroke-dasharray="1 2"/><path d="M0 34h68M0 51h68" stroke="#cfcfcb" stroke-width="1.500"/></svg></div>
            <div class="app"><svg viewBox="0 0 68 68"><path d="M0 0h68v68H0z" fill="#fff"/><circle cx="27" cy="41" r="19" fill="#ee6f52"/><rect x="23" y="9" width="36" height="36" rx="4" fill="#55bfe8" opacity=".9"/><path d="M13 43q9-22 14-18 2 4-4 15 12-20 16-15 1 5-3 13 7-13 10-8-1 8 14 0" fill="none" stroke="#18395c" stroke-width="4" stroke-linecap="round"/></svg></div>
            <div class="app"><svg viewBox="0 0 68 68"><path d="M0 0h68v68H0z" fill="#18211f"/><svg x="8" y="20" width="21" height="25" viewBox="0 0 28 34" color="#fff"><use href="#i-apple"/></svg><text x="30" y="44" font-family="Inter, sans-serif" font-size="27" font-weight="500" fill="#fff">tv</text></svg></div>
            <div class="app"><svg viewBox="0 0 68 68"><path d="M0 0h68v68H0z" fill="#e94a56"/><path d="M24 51V19l24-6v32" fill="none" stroke="#fff" stroke-width="4"/><path d="M24 17l24-6v9l-24 6z" fill="#fff"/><ellipse cx="19" cy="51" rx="7" ry="5.500" fill="#fff"/><ellipse cx="43" cy="46" rx="7" ry="5.500" fill="#fff"/></svg></div>
            <div class="app"><svg viewBox="0 0 68 68"><path d="M0 0h68v68H0z" fill="url(#gBlueDown)"/><path d="M18 10h32l4 17q0 3-3 3H17q-3 0-3-3z" fill="#f4f4f4"/><path d="M19 27h30" stroke="#7d8790" stroke-width="2"/><circle cx="34" cy="18" r="6" fill="#e6bb45"/><path d="M34 18v-6a6 6 0 0 0-6 6z" fill="#d84a48"/><path d="M34 18h6a6 6 0 0 1-6 6z" fill="#5db06a"/><path d="M34 30v27" stroke="#dfe3e8" stroke-width="3"/><path d="M23 58h22" stroke="#eceff2" stroke-width="4"/></svg></div>
            <div class="app"><svg viewBox="0 0 68 68"><path d="M0 0h68v68H0z" fill="#74dc5c"/><path d="M16 58V44M28 58V32M40 58V10M52 58V22" stroke="#f8f8f8" stroke-width="8"/></svg></div>
            <div class="app running"><svg viewBox="0 0 68 68"><path d="M0 0h68v68H0z" fill="#f0a041"/><path d="M20 58h38" stroke="#fbd9a6" stroke-width="3"/><path d="M12 57l3-11 36-31q6-4 5 3L22 50z" fill="#fafafa" stroke="#b97a35" stroke-width="1"/></svg></div>
            <div class="app running"><svg viewBox="0 0 68 68"><path d="M0 0h68v68H0z" fill="url(#gBlueDown)"/><path d="M36 15L20 43M30 15l22 38M13 42h30M51 42h5M18 48l-3 5" stroke="#fff" stroke-width="6" stroke-linecap="round"/></svg></div>
            <div class="app"><svg viewBox="0 0 68 68"><path d="M0 0h68v68H0z" fill="url(#gGray)"/><circle cx="34" cy="34" r="28" fill="none" stroke="#333" stroke-width="3" stroke-dasharray="2 1.500"/><circle cx="34" cy="34" r="24" fill="#8a8d8f" stroke="#2c2c2c" stroke-width="6"/><circle cx="34" cy="34" r="16" fill="none" stroke="#444" stroke-width="2"/><path d="M34 34h23M34 34L22 14M34 34L22 54" stroke="#2c2c2c" stroke-width="6"/><path d="M34 34h22M34 34L23 15M34 34L23 53" stroke="#a7abad" stroke-width="2.500"/></svg><span class="badge">3</span></div>
        </div>
        <span class="dock-divider"></span>
        <div class="dock-running">
            <div class="app running"><svg viewBox="0 0 68 68"><path d="M0 0h68v68H0z" fill="#fafafa"/><circle cx="34" cy="34" r="29" fill="#dc4b3c"/><path d="M9 19l16 23 9 21A29 29 0 0 1 9 19z" fill="#48a055"/><path d="M34 20h25a29 29 0 0 1-25 43l12-22z" fill="#f6c643"/><circle cx="34" cy="34" r="14" fill="#fff"/><circle cx="34" cy="34" r="11" fill="#4580ec"/></svg></div>
            <div class="app running"><svg viewBox="0 0 68 68"><path d="M0 0h68v68H0z" fill="#15140f"/><path d="M34 10l21 12v24L34 58 13 46V22z" fill="#63635f"/><path d="M34 58V36L13 46z" fill="#8a8a86"/><path d="M13 22h42L34 58V34z" fill="#f4f4f2"/><path d="M55 22L34 58V34z" fill="#c7c7c4"/></svg></div>
            <div class="app running"><svg viewBox="0 0 68 68"><path d="M0 0h68v68H0z" fill="url(#gGray)"/><rect x="3" y="3" width="62" height="62" rx="13" fill="#000"/><rect x="7" y="7" width="54" height="54" rx="9" fill="#252525"/><path d="M12 13l7 5-7 5M23 25h10" fill="none" stroke="#fff" stroke-width="2.500"/></svg></div>
            <div class="app running"><svg viewBox="0 0 68 68"><path d="M0 0h68v68H0z" fill="#fff"/><path d="M16 9q-9 7-9 25 1 20 16 26 4 0 5-3-9-8-10-21-1-12 3-20 1-7-5-7z" fill="#3a2d26"/><path d="M36 12q2-5 7-4 7-1 8 7-1 7-3 10 4 13 0 25-6 9-20 9-4-2-2-10 2-16 5-24 4-6 5-13z" fill="#4f3a2c"/><path d="M41 20q5 1 4 7-6 8-8 18-1 7-3 12-3-9 0-18 2-11 7-19z" fill="#eee2d3"/><circle cx="49" cy="48" r="12" fill="#68afb5"/><text x="49" y="53" text-anchor="middle" font-family="Inter, sans-serif" font-size="14" fill="#fff">CE</text></svg></div>
            <div class="app running"><svg class="loose" viewBox="0 0 68 68"><rect width="68" height="68" rx="16" fill="#eceef0"/><rect x="5" y="5" width="58" height="58" rx="10" fill="#88a8e0"/><path d="M5 36h58v17q0 10-10 10H15Q5 63 5 53z" fill="#334d7c"/><path d="M5 46q12-6 26 0 18-4 30 2v8q-3 7-8 7H15Q5 62 5 53z" fill="#c6d2e0"/><path d="M14 62l7-6 7 7z" fill="#6d553d"/><path d="M34 36q0-3 4-3h22q4 0 4 3v10H34z" fill="#1a1a1a"/><path d="M36 46h26l6 22q0 3-4 3H34q-4 0-4-3z" fill="#d9dde2" stroke="#8b8f94"/><path d="M41 51l7 1v8l-8-2zM52 51l6 3-2 8-5-3z" fill="#7c8796"/></svg></div>
            <div class="app running"><svg viewBox="0 0 68 68"><path d="M0 0h68v68H0z" fill="url(#gWhite)"/><circle cx="34" cy="34" r="28" fill="#429fdc"/><path d="M17 34l30-12-5 25-9-7-6 5 1-9z" fill="#fff"/></svg></div>
            <div class="app running"><svg viewBox="0 0 68 68"><use href="#i-quicktime"/></svg></div>
        </div>
        <span class="dock-divider wide"></span>
        <div class="dock-windows">
            <div class="app"><svg class="loose" viewBox="0 0 80 68"><path d="M0 12h79v44H0z" fill="#fff"/><path d="M0 12h79v5H0z" fill="#ececec"/><path d="M4 22h10M4 42h28M4 46h26M4 38h30" stroke="#999" stroke-width="1.500"/><path d="M4 30h24M4 35h31" stroke="#111" stroke-width="3"/><rect x="54" y="28" width="17" height="16" rx="4" fill="#1d2ee0"/><svg x="52" y="46" width="26" height="26" viewBox="0 0 68 68"><use href="#i-finder"/></svg></svg></div>
            <div class="app"><svg class="loose" viewBox="0 0 80 68"><path d="M0 14h79v40H0z" fill="#53616f"/><path d="M0 14h79v3H0z" fill="#2f3438"/><path d="M7 27h13M7 37h13M60 27h14M60 37h12" stroke="#465262" stroke-width="5"/><path d="M29 31h24" stroke="#c8ced6" stroke-width="1.500"/><rect x="36" y="35" width="9" height="4" fill="#6c50e0"/><path d="M28 45h24" stroke="#2c343c" stroke-width="4"/><svg x="52" y="46" width="26" height="26" viewBox="0 0 68 68"><use href="#i-quicktime"/></svg></svg></div>
            <div class="app"><svg class="loose" viewBox="0 0 68 68"><path d="M4 4h60l-8 64q-1 4-7 4H19q-6 0-7-4z" fill="#dededc"/><path d="M14 12l7 58M30 14l-2 56M44 14l-3 56" stroke="#e8e8e6" stroke-width="5"/><ellipse cx="34" cy="5" rx="30" ry="7" fill="#aaa"/><path d="M7 5L15-6l10 5 8-5 8 6 7-5 8 10-4 5q-19 7-42 2z" fill="#f0f0ee"/><path d="M13 2l8-4 4 9zM37 5l7-7 9 9-9 3zM27-2l6 6-5 6z" fill="#5d6266"/><path d="M25 5l5-3 1 5z" fill="#57a8cf"/></svg></div>
        </div>
    </footer>
</body>
</html>
```
FILE: styles.css
```css
* {
    box-sizing: border-box;
}
body {
    margin: 0;
    height: 100vh;
    overflow: hidden;
    position: relative;
    font-family: Inter, "Noto Sans", sans-serif;
    background: linear-gradient(100deg, #020e1b 0%, #020e1b 17%, #22050f 19%, #2c0820 32%, #35110f 34%, #3d1512 41%, #2a0818 43%, #200918 55%, #2d0b28 66%, #38102c 72%, #4d1210 82%, #65200f 90%, #8a2c12 100%);
}
h1, h2, p, ul {
    margin: 0;
    padding: 0;
}
a {
    text-decoration: none;
    color: inherit;
}
button {
    font: inherit;
    color: inherit;
    border: none;
    background: none;
    padding: 0;
}
svg {
    display: block;
    flex: none;
}
.sprite {
    position: absolute;
    width: 0;
    height: 0;
}

/* menu bar */
.menubar {
    height: 48px;
    display: flex;
    justify-content: space-between;
    align-items: center;
    padding: 0 38px;
    font-size: 26px;
    line-height: 32px;
    font-weight: 500;
    color: #efe8e5;
    background: linear-gradient(to right, #4f3530 0%, #5f3b2b 15%, #7b4022 32%, #8b3b1f 42%, #88361f 58%, #792f21 68%, #642b25 82%, #472429 94%, #3a2029 100%);
}
.menu {
    display: flex;
    align-items: center;
}
.menu button {
    padding: 0 19px;
}
.menu .menu-apple {
    padding: 0 20px 0 0;
}
.menu-apple svg {
    width: 28px;
    height: 34px;
}
.menu .menu-app {
    font-weight: 700;
}
.status {
    display: flex;
    align-items: center;
    gap: 38px;
}
.status svg {
    width: 32px;
    height: 32px;
}
.status .status-docker {
    width: 38px;
}
.status .status-battery {
    width: 52px;
    height: 26px;
}
.status .status-wifi {
    width: 36px;
    height: 28px;
}
.status .status-search {
    width: 26px;
    height: 26px;
}
.clock {
    display: flex;
    gap: 18px;
}

/* windows behind the browser */
.back-window {
    position: absolute;
    top: 50px;
    display: flex;
    align-items: center;
    border-top: 2px solid #77797b;
    border-radius: 20px 20px 0 0;
}
.back-window i {
    width: 24px;
    height: 24px;
    border-radius: 50%;
}
.back-right {
    left: 0;
    right: 0;
    height: 68px;
    justify-content: flex-end;
    padding-right: 12px;
    background: #2b2b2b;
}
.back-right button {
    width: 56px;
    height: 44px;
    border-radius: 18px;
    background: #3d3d3d;
    color: #dcdcdc;
    display: flex;
    align-items: center;
    justify-content: center;
}
.back-right svg {
    width: 26px;
    height: 26px;
}
.back-light {
    left: 18px;
    width: 400px;
    height: 56px;
    gap: 16px;
    padding-left: 16px;
    border-color: #f4efed;
    background: #e6e0dd;
}
.back-light i {
    background: #c9c5c3;
    border: 1px solid #aaa6a4;
}
.back-editor {
    left: 220px;
    right: 100px;
    height: 68px;
    padding: 0 20px 0 22px;
    background: #1a1c21;
    color: #4d5262;
    font-size: 24px;
    line-height: 32px;
}
.editor-left {
    display: flex;
    align-items: center;
    flex: none;
    width: 718px;
}
.editor-dots {
    display: flex;
    gap: 16px;
    margin-right: 20px;
}
.editor-dots i {
    background: #666768;
}
.editor-dots .edited {
    border: 8px solid #666768;
    background: #222;
}
.editor-tab {
    padding: 4px 16px;
}
.editor-tab.selected {
    background: #282b34;
    border-radius: 8px;
    color: #767d92;
}
.editor-arrows {
    display: flex;
    gap: 24px;
    margin-right: 28px;
}
.editor-arrows svg,
.editor-search svg {
    width: 24px;
    height: 24px;
}
.forward svg,
svg.forward {
    transform: scaleX(-1);
}
.editor-arrows .forward {
    opacity: .4;
}
.editor-search {
    flex: 1;
    height: 48px;
    margin-right: 298px;
    display: flex;
    align-items: center;
    justify-content: center;
    gap: 12px;
    border: 2px solid #343744;
    border-radius: 10px;
    background: #25262a;
}
.editor-right {
    display: flex;
    align-items: center;
    gap: 18px;
}
.editor-right span {
    margin-right: 12px;
}
.editor-right svg {
    width: 30px;
    height: 30px;
}

/* browser window */
.browser {
    position: absolute;
    top: 94px;
    right: 0;
    bottom: 130px;
    left: 0;
    display: flex;
    flex-direction: column;
    overflow: hidden;
    border-radius: 24px;
    background: #d5e1fb;
    box-shadow: 0 0 24px rgba(0, 0, 0, .6);
}
.browser::after {
    content: "";
    position: absolute;
    right: 0;
    bottom: 0;
    left: 0;
    height: 80px;
    background: linear-gradient(to bottom, rgba(0, 0, 0, 0), rgba(0, 0, 0, .09));
}
.tabstrip {
    height: 80px;
    flex: none;
    display: flex;
    align-items: center;
    padding: 0 12px 0 42px;
    box-shadow: inset 0 1px #f0f4fd;
}
.traffic {
    display: flex;
    gap: 16px;
    margin-right: 36px;
}
.traffic i {
    width: 24px;
    height: 24px;
    border-radius: 50%;
    border: 1px solid rgba(0, 0, 0, .12);
}
.traffic .close {
    background: #ed6a5e;
}
.traffic .minimise {
    background: #f5bf4f;
}
.traffic .zoom {
    background: #61c554;
}
.tabs {
    flex: 1;
    height: 80px;
    display: flex;
    align-items: center;
}
.tab {
    position: relative;
    width: 64px;
    height: 32px;
    flex: none;
    display: flex;
    align-items: center;
    justify-content: center;
}
.tab.narrow {
    width: 62px;
}
.tab svg {
    width: 32px;
    height: 32px;
}
.tab svg.dark {
    padding: 4px;
    border-radius: 7px;
    background: #2c2c2a;
}
.letter-icon {
    width: 32px;
    height: 32px;
    border-radius: 50%;
    background: #051424;
    color: #fff;
    font: 700 24px/32px "Liberation Serif", serif;
    text-align: center;
}
.tab::after {
    content: "";
    position: absolute;
    top: 0;
    right: -2px;
    width: 4px;
    height: 32px;
    border-radius: 2px;
    background: #aec6f6;
}
.tab.last::after {
    display: none;
}
.tab.active {
    align-self: flex-end;
    height: 68px;
    margin: 0 6px;
    padding-bottom: 12px;
    border-radius: 20px 20px 0 0;
    background: #fff;
}
.tab.active svg {
    width: 24px;
    height: 24px;
}
.tab.active::before,
.tab.active::after {
    content: "";
    position: absolute;
    top: auto;
    bottom: 0;
    width: 20px;
    height: 20px;
    border-radius: 0;
}
.tab.active::before {
    right: 100%;
    background: radial-gradient(circle at 0 0, transparent 19px, #fff 20px);
}
.tab.active::after {
    right: auto;
    left: 100%;
    background: radial-gradient(circle at 100% 0, transparent 19px, #fff 20px);
}
.new-tab {
    margin-left: 20px;
}
.new-tab svg,
.tab-search svg {
    width: 26px;
    height: 26px;
}
.tab-search {
    width: 56px;
    height: 56px;
    display: flex;
    align-items: center;
    justify-content: center;
    border-radius: 20px;
    background: #ebf1fd;
    color: #1f1f1f;
}

/* toolbar */
.toolbar {
    height: 94px;
    flex: none;
    display: flex;
    align-items: center;
    padding: 0 12px 0 32px;
    border-bottom: 2px solid #e0e1e3;
    border-radius: 20px 20px 0 0;
    background: #fff;
    color: #474747;
}
.nav-buttons {
    display: flex;
    gap: 48px;
    margin-right: 40px;
}
.nav-buttons svg {
    width: 24px;
    height: 24px;
}
.nav-buttons .forward {
    color: #a9a9a9;
}
.omnibox {
    flex: 1;
    height: 68px;
    display: flex;
    align-items: center;
    padding: 0 32px 0 12px;
    border-radius: 34px;
    background: #ecf1f9;
}
.not-secure {
    height: 48px;
    display: flex;
    align-items: center;
    gap: 12px;
    padding: 0 20px 0 14px;
    border-radius: 24px;
    background: #fff;
    color: #b3352a;
    font-size: 24px;
    font-weight: 500;
}
.not-secure svg {
    width: 24px;
    height: 24px;
}
.address {
    flex: 1;
    margin-left: 16px;
    padding: 0;
    border: none;
    background: none;
    font: 400 28px/36px Inter, sans-serif;
    color: #1f1f1f;
}
.bookmark svg {
    width: 32px;
    height: 32px;
}
.tool {
    margin-left: 37px;
}
.tool svg {
    width: 36px;
    height: 36px;
}
.tool.profile svg {
    width: 32px;
    height: 32px;
}
.tool-divider {
    width: 4px;
    height: 32px;
    margin-left: 30px;
    border-radius: 2px;
    background: #d3e2fd;
}
.update {
    height: 68px;
    display: flex;
    align-items: center;
    gap: 22px;
    margin-left: 28px;
    padding: 0 28px 0 24px;
    border-radius: 34px;
    background: #d5e1fb;
    color: #0b1f4a;
    font-size: 25px;
    font-weight: 500;
}
.update svg {
    width: 8px;
    height: 32px;
    fill: #0b1f4a;
}

/* pricing page */
.page {
    flex: 1;
    min-height: 0;
    overflow: hidden;
    background: #f9fafc;
    color: #4a5565;
}
.site-header {
    border-bottom: 2px solid #e5e7eb;
    background: #fff;
}
.site-nav {
    max-width: 2624px;
    height: 136px;
    margin: 0 auto;
    padding: 0 64px;
    display: flex;
    align-items: center;
    justify-content: space-between;
}
.brand {
    display: flex;
    align-items: center;
    gap: 16px;
    font-size: 40px;
    line-height: 56px;
    font-weight: 700;
    color: #101828;
}
.brand-mark {
    width: 64px;
    height: 64px;
    display: flex;
    align-items: center;
    justify-content: center;
    border-radius: 16px;
    background: #2d5df6;
    color: #fff;
}
.links {
    display: flex;
    gap: 64px;
    font-size: 32px;
    line-height: 48px;
}
.account {
    display: flex;
    align-items: center;
    gap: 32px;
    font-size: 28px;
    line-height: 40px;
    font-weight: 500;
}
.login {
    padding: 16px 32px;
    color: #364153;
}
.signup {
    padding: 16px 32px;
    border-radius: 16px;
    background: #2d5df6;
    color: #fff;
}
.hero {
    text-align: center;
    padding-bottom: 96px;
}
.hero h1 {
    margin-bottom: 32px;
    font-size: 96px;
    line-height: 96px;
    font-weight: 700;
    color: #101828;
}
.lead {
    margin-bottom: 16px;
    font-size: 40px;
    line-height: 56px;
}
.starting {
    margin-bottom: 16px;
    font-size: 40px;
    line-height: 56px;
    font-weight: 600;
    color: #49a34c;
}
.cards-note {
    display: flex;
    align-items: center;
    justify-content: center;
    gap: 8px;
    font-size: 28px;
    line-height: 40px;
    color: #6a7282;
}
.cards-note svg {
    width: 28px;
    height: 20px;
}
.plans {
    max-width: 2304px;
    margin: 0 auto;
    display: grid;
    grid-template-columns: repeat(3, 1fr);
    gap: 64px;
    align-items: start;
}
.plan {
    padding: 64px;
    border-radius: 16px;
    background: #fff;
    box-shadow: 0 8px 12px rgba(0, 0, 0, .08);
}
.plan h2 {
    margin-bottom: 16px;
    font-size: 48px;
    line-height: 64px;
    font-weight: 700;
    color: #101828;
}
.price {
    font-size: 72px;
    line-height: 80px;
    font-weight: 700;
    color: #101828;
}
.price span {
    font-size: 32px;
    line-height: 40px;
    font-weight: 400;
    color: #4a5565;
}
.usd {
    margin-top: 8px;
    font-size: 28px;
    line-height: 40px;
    color: #6a7282;
}
.plan ul {
    margin: 48px 0 64px;
    list-style: none;
    display: grid;
    gap: 24px;
}
.plan li {
    display: flex;
    align-items: center;
    gap: 16px;
    font-size: 32px;
    line-height: 48px;
}
.plan li svg {
    width: 40px;
    height: 40px;
}
.plan-button {
    width: 100%;
    padding: 24px;
    border-radius: 16px;
    background: #f9fafb;
    color: #9fa4ae;
    font-size: 32px;
    line-height: 48px;
    font-weight: 500;
}
.pro {
    margin: -37px -22px 0;
    padding: 0;
    overflow: hidden;
    border: 4px solid #2d5df6;
    border-radius: 20px;
}
.best {
    display: flex;
    align-items: center;
    justify-content: center;
    gap: 12px;
    height: 76px;
    background: #2d5df6;
    color: #fff;
    font-size: 29px;
    font-weight: 600;
}
.best svg {
    width: 22px;
    height: 28px;
}
.pro-body {
    padding: 66px 68px;
}
.pro h2 {
    font-size: 50px;
    line-height: 68px;
}
.pro .price {
    font-size: 76px;
    line-height: 84px;
}
.pro .price span {
    font-size: 34px;
    line-height: 42px;
}
.pro .usd {
    font-size: 29px;
    line-height: 42px;
}
.pro ul {
    margin-top: 50px;
    gap: 26px;
}
.pro li {
    font-size: 34px;
    line-height: 50px;
}
.pro li svg {
    width: 42px;
    height: 42px;
}

/* dock */
.dock {
    position: absolute;
    right: 71px;
    bottom: 10px;
    left: 71px;
    height: 106px;
    display: flex;
    padding: 0 4px 0 2px;
    border: 2px solid rgba(255, 255, 255, .25);
    border-radius: 38px;
    background: linear-gradient(to right, #5d616e 0%, #5d616e 17%, #7b5b6a 22%, #92597a 29%, #935a6c 32%, #a05f60 38%, #9b586b 45%, #87596b 53%, #8f5b7e 64%, #945b75 73%, #a86068 84%, #b86b61 92%, #cb8b76 98%);
}
.dock-apps {
    flex: 1;
    display: flex;
}
.dock-apps .app {
    flex: 1;
}
.dock-running,
.dock-windows {
    display: flex;
}
.app {
    position: relative;
    width: 88px;
    display: flex;
    justify-content: center;
    align-items: flex-start;
    padding-top: 14px;
}
.app > svg {
    width: 68px;
    height: 68px;
    border-radius: 16px;
    box-shadow: 0 1px 4px rgba(0, 0, 0, .35);
}
.app > .loose {
    overflow: visible;
    border-radius: 0;
    box-shadow: none;
}
.dock-windows .loose {
    width: 80px;
}
.dock-windows .app:last-child .loose {
    width: 68px;
}
.running::after {
    content: "";
    position: absolute;
    bottom: 2px;
    width: 8px;
    height: 8px;
    border-radius: 50%;
    background: #12060b;
}
.badge {
    position: absolute;
    top: 6px;
    left: calc(50% + 12px);
    width: 32px;
    height: 32px;
    border-radius: 50%;
    background: #e55343;
    color: #fff;
    font-size: 20px;
    line-height: 32px;
    text-align: center;
}
.dock-divider {
    position: relative;
    width: 40px;
    margin: 12px 0;
    background: linear-gradient(#6b3a56, #6b3a56) center / 2px 100% no-repeat;
}
.dock-divider.wide {
    width: 42px;
    background-image: linear-gradient(#843f40, #843f40);
}
```
